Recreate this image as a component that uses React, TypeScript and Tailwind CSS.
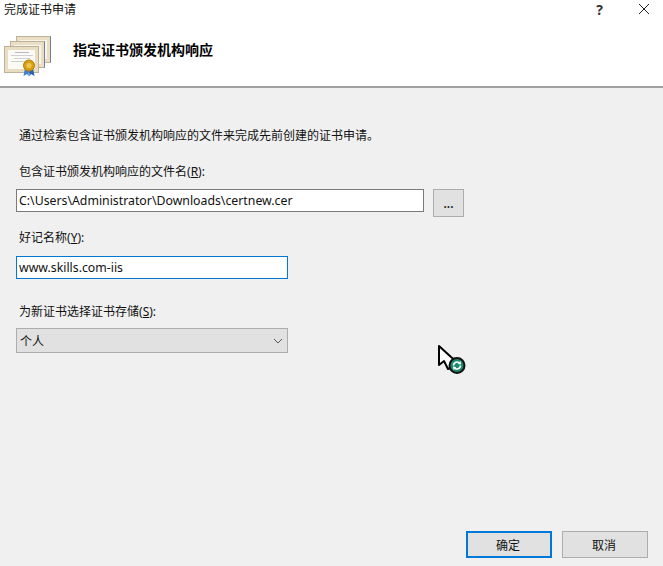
const fontStack = "font-['Noto_Sans','Noto_Sans_CJK_SC',sans-serif]";

function Mnemonic({ label, letter }: { label: string; letter: string }) {
  return (
    <div className="flex h-[18px] items-center pl-[19px] text-[12px] leading-[18px] text-[#111]">
      {label}(<span className="underline">{letter}</span>):
    </div>
  );
}

function Certificate({ className }: { className: string }) {
  return (
    <div className={`absolute h-[27px] w-[35px] border border-[#bdb196] border-r-[#6f7f9c] bg-[#eadfc6] p-[3px] ${className}`}>
      <div className="h-full w-full bg-[#f8f5ea]" />
    </div>
  );
}

function CertIcon() {
  return (
    <div className="relative h-[41px] w-[52px]">
      <Certificate className="left-[16px] top-[0px]" />
      <Certificate className="left-[10px] top-[5px]" />
      <div className="absolute left-[4px] top-[10px] h-[27px] w-[35px] border border-[#bdb196] bg-[#e8dcc2] p-[3px]">
        <div className="flex h-full w-full flex-col items-center gap-[2px] bg-[#fbfaf5] pt-[2px]">
          <div className="h-px w-[14px] bg-[#b9b9c4]" />
          <div className="h-px w-[22px] bg-[#cfcfd6]" />
          <div className="h-px w-[16px] bg-[#cfcfd6]" />
          <div className="h-px w-[22px] bg-[#cfcfd6]" />
        </div>
      </div>
      <svg className="absolute left-[22px] top-[23px]" width="14" height="18" viewBox="0 0 14 18">
        <path d="M3 9 L1.5 17 L5 15 L6.5 17.5 L7 11 Z" fill="#3f7fd0" />
        <path d="M11 9 L12.5 17 L9 15 L7.5 17.5 L7 11 Z" fill="#2a62b5" />
        <circle cx="7" cy="6.5" r="5.5" fill="#d79f12" stroke="#b07c08" />
        <circle cx="7" cy="6.5" r="2.6" fill="#edc552" />
      </svg>
    </div>
  );
}

function BusyCursor() {
  return (
    <svg className="absolute left-[437px] top-[344px]" width="30" height="32" viewBox="0 0 30 32">
      <path d="M2 2 L2 21 L7 17 L11 25 L15 23 L19 17 L14 13 Z" fill="#fff" stroke="#000" strokeWidth="2" strokeLinejoin="round" />
      <circle cx="20" cy="21.5" r="7.5" fill="#1c8a6c" stroke="#111" strokeWidth="2" />
      <path d="M16.5 21.5 A3.6 3.6 0 0 1 23 19.5" fill="none" stroke="#fff" strokeWidth="1.6" />
      <path d="M23.5 17 L24 20.5 L20.8 20.1 Z" fill="#fff" />
      <path d="M23.5 21.5 A3.6 3.6 0 0 1 17 23.5" fill="none" stroke="#fff" strokeWidth="1.6" />
      <path d="M16.5 26 L16 22.5 L19.2 22.9 Z" fill="#fff" />
    </svg>
  );
}

export default function App() {
  return (
    <div className={`relative flex h-[566px] w-[663px] flex-col overflow-hidden bg-[#f0f0f0] ${fontStack}`}>
      <header className="h-[88px] shrink-0 border-b-2 border-[#a0a0a0] bg-white">
        <div className="flex h-[17px] items-center justify-between pl-[4px] pr-[13px] pt-[1px]">
          <span className="text-[12px] leading-[17px] text-[#111]">完成证书申请</span>
          <div className="flex items-center gap-[35px]">
            <span className="text-[14px] font-bold leading-[17px] text-[#333]">?</span>
            <svg width="12" height="12" viewBox="0 0 12 12">
              <path d="M1 1 L11 11 M11 1 L1 11" stroke="#222" strokeWidth="1" fill="none" />
            </svg>
          </div>
        </div>
        <div className="flex items-start pt-[19px]">
          <CertIcon />
          <h1 className="ml-[21px] mt-[5px] text-[14px] font-bold leading-[18px] text-black">指定证书颁发机构响应</h1>
        </div>
      </header>

      <main className="flex flex-1 flex-col">
        <p className="mt-[39px] h-[18px] pl-[19px] text-[12px] leading-[18px] text-[#111]">
          通过检索包含证书颁发机构响应的文件来完成先前创建的证书申请。
        </p>

        <div className="mt-[18px]">
          <Mnemonic label="包含证书颁发机构响应的文件名" letter="R" />
        </div>
        <div className="ml-[16px] mt-[8px] flex items-start gap-[9px]">
          <div className="flex h-[23px] w-[408px] items-center border border-[#7a7a7a] bg-white pl-[2px] pt-[1px] text-[12.3px] text-[#111]">
            C:\Users\Administrator\Downloads\certnew.cer
          </div>
          <button className="flex h-[28px] w-[31px] items-center justify-center border border-[#adadad] bg-[#e1e1e1] pt-[2px] text-[12px] font-semibold leading-none text-[#222]">
            ...
          </button>
        </div>

        <div className="mt-[12px]">
          <Mnemonic label="好记名称" letter="Y" />
        </div>
        <div className="ml-[16px] mt-[9px] flex h-[23px] w-[272px] items-center border border-[#0078d7] bg-white pl-[2px] pt-[1px] text-[12.3px] text-[#111]">
          www.skills.com-iis
        </div>

        <div className="mt-[24px]">
          <Mnemonic label="为新证书选择证书存储" letter="S" />
        </div>
        <div className="ml-[16px] mt-[7px] flex h-[25px] w-[272px] items-center justify-between border border-[#adadad] bg-[#e1e1e1] pl-[3px] pr-[4px] text-[12px] text-[#111]">
          <span className="pt-[2px]">个人</span>
          <svg width="10" height="6" viewBox="0 0 10 6">
            <path d="M1 1 L5 5 L9 1" fill="none" stroke="#555" strokeWidth="1" />
          </svg>
        </div>

        <div className="mb-[8px] mr-[15px] mt-auto flex justify-end gap-[10px]">
          <button className="h-[27px] w-[86px] border-2 border-[#0078d7] bg-[#e1e1e1] pr-[2px] pt-[2px] text-[12px] text-[#111]">确定</button>
          <button className="h-[27px] w-[86px] border border-[#adadad] bg-[#e1e1e1] pr-[2px] pt-[2px] text-[12px] text-[#111]">取消</button>
        </div>
      </main>

      <BusyCursor />
    </div>
  );
}
